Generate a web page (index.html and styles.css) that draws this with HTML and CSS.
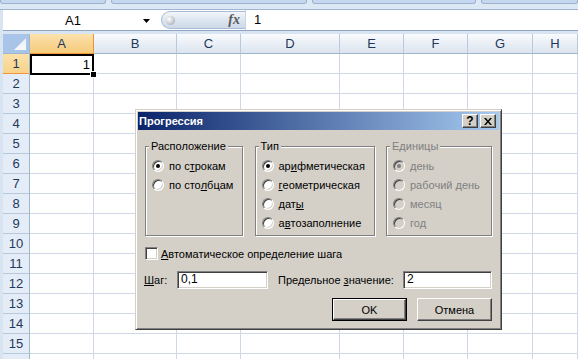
FILE: index.html
```html
<!DOCTYPE html>
<html lang="ru">
<head>
    <meta charset="UTF-8">
    <meta name="viewport" content="width=device-width, initial-scale=1.0">
    <title>Прогрессия</title>
    <link rel="stylesheet" href="styles.css">
</head>
<body>
    <div class="window">
        <div class="ribbon-edge">
            <div class="rgroup g1"></div>
            <div class="rgroup g2"></div>
            <div class="rgroup g3"></div>
            <div class="rgroup g4"></div>
        </div>
        <div class="formula-bar">
            <div class="name-box">
                <span class="name">A1</span>
                <span class="drop"><svg width="7" height="4" viewBox="0 0 7 4"><path d="M0 0h7L3.5 4z" fill="#000"/></svg></span>
            </div>
            <div class="fx-pill">
                <span class="grip"></span>
                <span class="fx">fx</span>
            </div>
            <div class="formula">1</div>
        </div>
        <div class="bar-gap"></div>
        <div class="sheet">
            <div class="row-heads">
                <div class="corner"></div>
                <div class="rh sel">1</div>
                <div class="rh">2</div>
                <div class="rh">3</div>
                <div class="rh">4</div>
                <div class="rh">5</div>
                <div class="rh">6</div>
                <div class="rh">7</div>
                <div class="rh">8</div>
                <div class="rh">9</div>
                <div class="rh">10</div>
                <div class="rh">11</div>
                <div class="rh">12</div>
                <div class="rh">13</div>
                <div class="rh">14</div>
                <div class="rh">15</div>
                <div class="rh"></div>
            </div>
            <div class="col col-a">
                <div class="ch sel">A</div>
                <div class="cells">
                    <div class="active">1<span class="handle"></span></div>
                </div>
            </div>
            <div class="col col-b"><div class="ch">B</div><div class="cells"></div></div>
            <div class="col col-c"><div class="ch">C</div><div class="cells"></div></div>
            <div class="col col-d"><div class="ch">D</div><div class="cells"></div></div>
            <div class="col col-e"><div class="ch">E</div><div class="cells"></div></div>
            <div class="col col-f"><div class="ch">F</div><div class="cells"></div></div>
            <div class="col col-g"><div class="ch">G</div><div class="cells"></div></div>
            <div class="col col-h"><div class="ch">H</div><div class="cells"></div></div>
        </div>

        <div class="dialog">
            <div class="title-bar">
                <span class="title">Прогрессия</span>
                <span class="cap-btn help">?</span>
                <span class="cap-btn close"><svg width="8" height="7" viewBox="0 0 8 7"><path d="M0 0h2l2 2.4L6 0h2L5 3.5 8 7H6L4 4.6 2 7H0l3-3.5z" fill="#000"/></svg></span>
            </div>
            <div class="body">
                <div class="groups">
                    <div class="group g-place">
                        <span class="group-title">Расположение</span>
                        <div class="opt"><span class="radio on"></span>по с<u>т</u>рокам</div>
                        <div class="opt"><span class="radio"></span>по сто<u>л</u>бцам</div>
                    </div>
                    <div class="group g-type">
                        <span class="group-title">Тип</span>
                        <div class="opt"><span class="radio on"></span>ар<u>и</u>фметическая</div>
                        <div class="opt"><span class="radio"></span><u>г</u>еометрическая</div>
                        <div class="opt"><span class="radio"></span>дат<u>ы</u></div>
                        <div class="opt"><span class="radio"></span>а<u>в</u>тозаполнение</div>
                    </div>
                    <div class="group g-units disabled">
                        <span class="group-title">Единицы</span>
                        <div class="opt"><span class="radio on"></span>день</div>
                        <div class="opt"><span class="radio"></span>рабочий день</div>
                        <div class="opt"><span class="radio"></span>месяц</div>
                        <div class="opt"><span class="radio"></span>год</div>
                    </div>
                </div>
                <div class="check-row"><span class="check"></span><u>А</u>втоматическое определение шага</div>
                <div class="step-row">
                    <span class="lbl-step"><u>Ш</u>аг:</span>
                    <span class="field f-step">0,1</span>
                    <span class="lbl-limit">Предельное <u>з</u>начение:</span>
                    <span class="field f-limit">2</span>
                </div>
                <div class="buttons">
                    <span class="btn default"><span>OK</span></span>
                    <span class="btn">Отмена</span>
                </div>
            </div>
        </div>
    </div>
</body>
</html>
```

FILE: styles.css
```css
body {
    margin: 0;
    background-color: #fff;
    font-family: "Liberation Sans", Arial, sans-serif;
    overflow: hidden;
}
.window {
    position: relative;
    width: 578px;
    height: 359px;
    overflow: hidden;
    background-color: #d9e4f2;
}

/* ribbon bottom edge */
.ribbon-edge {
    height: 9px;
    display: flex;
    gap: 5px;
    background-color: #dde8f5;
    border-bottom: 1px solid #9fb4d0;
}
.rgroup {
    height: 3px;
    border: 1px solid #9db2d0;
    border-top: none;
    border-radius: 0 0 3px 3px;
    background-color: #c6d8ef;
}
.g1 { width: 104px; }
.g2 { width: 194px; }
.g3 { width: 162px; }
.g4 { flex: 1; }

/* formula bar */
.formula-bar {
    margin-left: 3px;
    height: 20px;
    display: flex;
    background-color: #fff;
    border-bottom: 1px solid #8fa5c4;
    font-size: 13px;
    color: #000;
}
.name-box {
    width: 154px;
    display: flex;
    align-items: center;
}
.name {
    flex: 1;
    text-align: center;
}
.drop {
    width: 14px;
    display: flex;
    align-items: center;
    padding-top: 2px;
}
.fx-pill {
    margin-left: 4px;
    margin-top: 1px;
    width: 84px;
    height: 18px;
    box-sizing: border-box;
    display: flex;
    align-items: center;
    justify-content: space-between;
    border: 1px solid #a9bbd3;
    border-right: none;
    border-radius: 9px 0 0 9px;
    background: linear-gradient(#f3f6fa, #dbe4ef 55%, #cdd9e8);
}
.grip {
    width: 9px;
    height: 9px;
    margin-left: 4px;
    border-radius: 50%;
    background: radial-gradient(circle at 35% 35%, #fff, #b8bcc4 70%, #9aa0aa);
}
.fx {
    margin-right: 5px;
    font-family: "Liberation Serif", serif;
    font-style: italic;
    font-weight: bold;
    font-size: 14px;
    color: #5a5a5a;
}
.formula {
    flex: 1;
    border-left: 1px solid #c6d3e3;
    padding-left: 8px;
    line-height: 20px;
}
.bar-gap {
    height: 3px;
}

/* sheet */
.sheet {
    margin-left: 3px;
    height: 325px;
    display: flex;
    background-color: #fff;
    font-size: 13px;
}
.row-heads {
    width: 26px;
    display: flex;
    flex-direction: column;
    background-color: #e4ecf7;
    border-right: 1px solid #9eb6ce;
}
.corner {
    position: relative;
    height: 20px;
    flex-shrink: 0;
    box-sizing: border-box;
    background-color: #a9c4e9;
    border-bottom: 1px solid #9eb6ce;
}
.corner::after {
    content: "";
    position: absolute;
    left: 11px;
    top: 4px;
    width: 12px;
    height: 12px;
    background: linear-gradient(#e9eff8, #f7f9fc);
    clip-path: polygon(0 100%, 100% 0, 100% 100%);
}
.rh {
    height: 20px;
    flex-shrink: 0;
    box-sizing: border-box;
    border-bottom: 1px solid #b7c8dc;
    text-align: center;
    line-height: 19px;
    color: #1e395b;
}
.rh.sel {
    background: linear-gradient(#fbe1a9, #f8d38b);
    border-bottom-color: #f29536;
}
.col {
    display: flex;
    flex-direction: column;
    flex-shrink: 0;
}
.col-a { width: 64px; }
.col-b { width: 83px; }
.col-c { width: 64px; }
.col-d { width: 99px; }
.col-e { width: 64px; }
.col-f { width: 64px; }
.col-g { width: 65px; }
.col-h { flex: 1; flex-shrink: 1; }
.ch {
    height: 20px;
    box-sizing: border-box;
    border-right: 1px solid #b9c8db;
    border-bottom: 1px solid #9eb6ce;
    background: linear-gradient(#f9fbfd, #eaeff6 50%, #dce4ee);
    text-align: center;
    line-height: 19px;
    color: #1e395b;
}
.ch.sel {
    background: linear-gradient(#fbe2ac, #f8d593 50%, #f6cc7c);
    border-right-color: #f29536;
    border-bottom-color: #f29536;
}
.cells {
    flex: 1;
    border-right: 1px solid #d0d7e5;
    background: repeating-linear-gradient(to bottom, #fff 0 19px, #d0d7e5 19px 20px);
}
.active {
    position: relative;
    z-index: 1;
    height: 21px;
    margin-right: -1px;
    box-sizing: border-box;
    border: 2px solid #000;
    background-color: #fff;
    text-align: right;
    padding-right: 2px;
    line-height: 17px;
    color: #000;
}
.handle {
    position: absolute;
    right: -4px;
    bottom: -4px;
    width: 5px;
    height: 5px;
    background-color: #000;
    box-shadow: 0 0 0 1px #fff;
}

/* dialog */
.dialog {
    position: absolute;
    left: 135px;
    top: 109px;
    z-index: 2;
    width: 367px;
    height: 221px;
    box-sizing: border-box;
    padding: 2px;
    background-color: #d4d0c8;
    border: 1px solid;
    border-color: #d4d0c8 #404040 #404040 #d4d0c8;
    box-shadow: inset 1px 1px #fff, inset -1px -1px #808080;
    font-family: "Liberation Sans", Tahoma, sans-serif;
    font-size: 11px;
    color: #000;
}
.title-bar {
    height: 18px;
    display: flex;
    align-items: center;
    padding: 0 3px 0 1px;
    background: linear-gradient(to right, #0a246a, #a6caf0);
    color: #fff;
    font-weight: bold;
}
.title {
    flex: 1;
}
.cap-btn {
    width: 16px;
    height: 14px;
    box-sizing: border-box;
    display: flex;
    align-items: center;
    justify-content: center;
    background-color: #d4d0c8;
    border: 1px solid;
    border-color: #fff #404040 #404040 #fff;
    box-shadow: inset -1px -1px #808080, inset 1px 1px #d4d0c8;
    color: #000;
}
.help {
    margin-right: 2px;
    font-size: 12px;
    line-height: 12px;
}
.body {
    padding: 16px 7px 0 7px;
}
.groups {
    display: flex;
    justify-content: space-between;
}
.group {
    position: relative;
    height: 90px;
    box-sizing: border-box;
    padding: 9px 0 0 6px;
    border: 1px solid #808080;
    box-shadow: inset 1px 1px #fff, 1px 1px #fff;
}
.g-place { width: 98px; }
.g-type { width: 120px; }
.g-units { width: 106px; }
.group-title {
    position: absolute;
    top: -7px;
    left: 3px;
    padding: 0 2px;
    line-height: 13px;
    background-color: #d4d0c8;
}
.opt {
    height: 19px;
    display: flex;
    align-items: center;
    white-space: nowrap;
}
.radio {
    position: relative;
    width: 12px;
    height: 12px;
    margin-right: 5px;
    flex-shrink: 0;
    box-sizing: border-box;
    border-radius: 50%;
    border: 1px solid;
    border-color: #808080 #fff #fff #808080;
    box-shadow: inset 1px 1px #404040, inset -1px -1px #d4d0c8;
    background-color: #fff;
}
.radio.on::after {
    content: "";
    position: absolute;
    left: 3px;
    top: 3px;
    width: 4px;
    height: 4px;
    border-radius: 50%;
    background-color: #000;
}
.disabled {
    color: #808080;
}
.disabled .radio {
    background-color: #d4d0c8;
}
.disabled .radio.on::after {
    background-color: #808080;
}
.check-row {
    margin-top: 11px;
    height: 13px;
    display: flex;
    align-items: center;
}
.check {
    width: 13px;
    height: 13px;
    margin-right: 3px;
    box-sizing: border-box;
    border: 1px solid;
    border-color: #808080 #fff #fff #808080;
    box-shadow: inset 1px 1px #404040, inset -1px -1px #d4d0c8;
    background-color: #fff;
}
.step-row {
    margin-top: 11px;
    height: 18px;
    display: flex;
    align-items: center;
}
.lbl-step {
    width: 33px;
    margin-left: -1px;
    padding-left: 0;
}
.lbl-limit {
    flex: 1;
    padding-left: 10px;
}
.field {
    height: 18px;
    box-sizing: border-box;
    padding-left: 3px;
    line-height: 15px;
    border: 1px solid;
    border-color: #808080 #fff #fff #808080;
    box-shadow: inset 1px 1px #404040, inset -1px -1px #d4d0c8;
    background-color: #fff;
    font-size: 12px;
}
.f-step { width: 91px; }
.f-limit { width: 89px; }
.buttons {
    margin-top: 9px;
    display: flex;
    justify-content: flex-end;
    gap: 10px;
}
.btn {
    width: 75px;
    height: 23px;
    box-sizing: border-box;
    display: flex;
    align-items: center;
    justify-content: center;
    border: 1px solid;
    border-color: #fff #404040 #404040 #fff;
    box-shadow: inset -1px -1px #808080, inset 1px 1px #d4d0c8;
    background-color: #d4d0c8;
}
.btn.default {
    border: 1px solid #000;
    box-shadow: none;
    padding: 0;
}
.btn.default span {
    flex: 1;
    align-self: stretch;
    display: flex;
    align-items: center;
    justify-content: center;
    border: 1px solid;
    border-color: #fff #404040 #404040 #fff;
    box-shadow: inset -1px -1px #808080;
}
```
